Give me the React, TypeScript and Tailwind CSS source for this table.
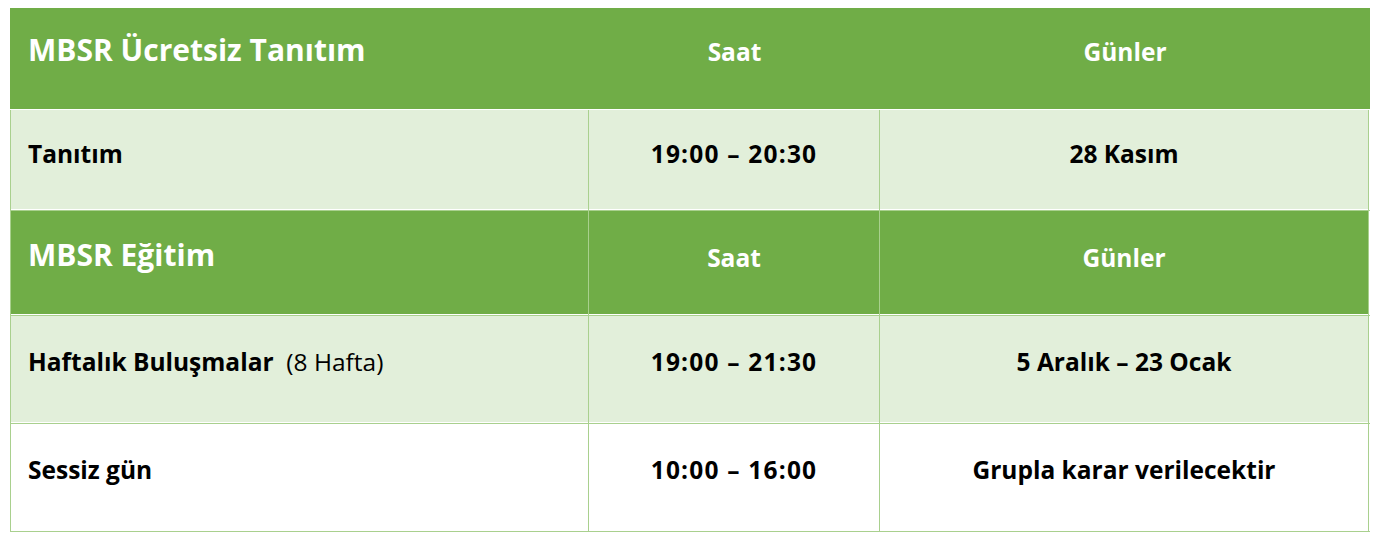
import React from "react";

const font = { fontFamily: "'Open Sans', Lato, 'Noto Sans', sans-serif" };

function BodyRow({
  h,
  pt,
  bg,
  first,
  time,
  days,
}: {
  h: string;
  pt: string;
  bg: string;
  first: React.ReactNode;
  time: string;
  days: string;
}) {
  const cell = `${bg} ${pt} border-r border-[#a9d08e] shadow-[inset_0_-1px_0_#ffffff] text-[24.5px] leading-[32px] font-bold text-black`;
  return (
    <div className={`grid grid-cols-[578px_291px_489px] border-l border-b border-[#a9d08e] ${h}`}>
      <div className={`${cell} pl-[17px]`}>{first}</div>
      <div className={`${cell} text-center`}>
        <span className="tracking-[1.2px]">{time}</span>
      </div>
      <div className={`${cell} text-center`}>{days}</div>
    </div>
  );
}

export default function App() {
  return (
    <div className="w-[1379px] h-[545px] bg-white pt-[8px] pl-[10px]" style={font}>
      <div className="w-[1360px]">
        {/* Header 1 */}
        <div className="grid grid-cols-[579px_291px_490px] h-[102px] bg-[#70ad47] border-b border-white text-white font-bold">
          <div className="pl-[18px] pt-[23px] text-[30px] leading-[38px]">MBSR Ücretsiz Tanıtım</div>
          <div className="text-center pt-[28px] text-[24.5px] leading-[32px]">Saat</div>
          <div className="text-center pt-[28px] text-[24.5px] leading-[32px]">Günler</div>
        </div>
        <BodyRow
          h="h-[101px]"
          pt="pt-[28px]"
          bg="bg-[#e2efda]"
          first="Tanıtım"
          time="19:00 – 20:30"
          days="28 Kasım"
        />
        {/* Header 2 */}
        <div className="grid grid-cols-[578px_291px_489px] h-[105px] border-l border-b border-[#a9d08e] text-white font-bold">
          <div className="bg-[#70ad47] border-r border-[#a9d08e] shadow-[inset_0_-1px_0_#ffffff] pl-[17px] pt-[25px] text-[30px] leading-[38px]">
            MBSR Eğitim
          </div>
          <div className="bg-[#70ad47] border-r border-[#a9d08e] shadow-[inset_0_-1px_0_#ffffff] text-center pt-[31px] text-[24.5px] leading-[32px]">
            Saat
          </div>
          <div className="bg-[#70ad47] border-r border-[#a9d08e] shadow-[inset_0_-1px_0_#ffffff] text-center pt-[31px] text-[24.5px] leading-[32px]">
            Günler
          </div>
        </div>
        <BodyRow
          h="h-[108px]"
          pt="pt-[30px]"
          bg="bg-[#e2efda]"
          first={
            <span>
              Haftalık Buluşmalar<span className="font-normal whitespace-pre">{"  (8 Hafta)"}</span>
            </span>
          }
          time="19:00 – 21:30"
          days="5 Aralık – 23 Ocak"
        />
        <BodyRow
          h="h-[108px]"
          pt="pt-[30px]"
          bg="bg-white"
          first="Sessiz gün"
          time="10:00 – 16:00"
          days="Grupla karar verilecektir"
        />
      </div>
    </div>
  );
}
